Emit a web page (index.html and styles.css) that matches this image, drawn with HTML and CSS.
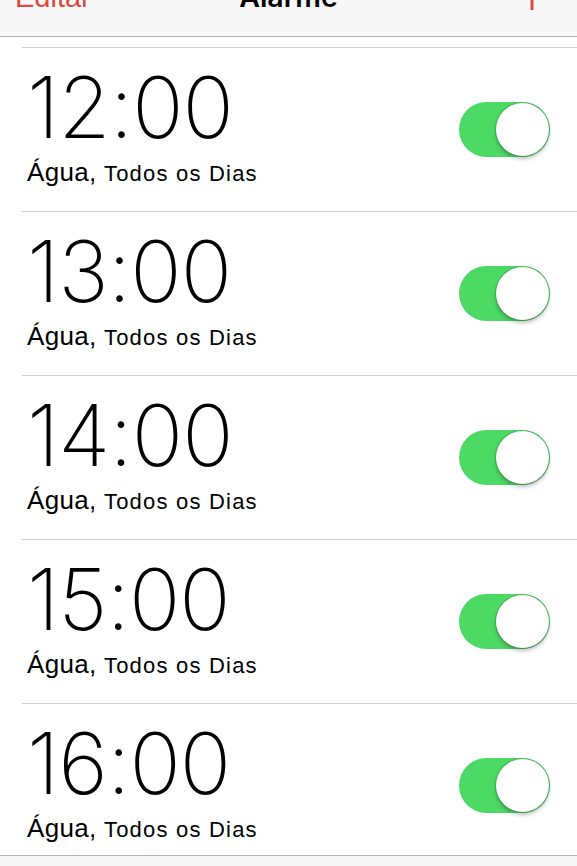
FILE: index.html
```html
<!DOCTYPE html>
<html>
<head>
	<meta charset="utf-8">
	<title>Alarme</title>
	<link rel="stylesheet" href="styles.css">
</head>
<body>
	<div class="screen">
		<div class="navbar">
			<span class="nav-btn">Editar</span>
			<span class="nav-title">Alarme</span>
			<span class="nav-add">
				<svg width="30" height="30" viewBox="0 0 30 30">
					<line x1="15" y1="0" x2="15" y2="30" stroke="#dc4a42" stroke-width="3"/>
					<line x1="0" y1="15" x2="30" y2="15" stroke="#dc4a42" stroke-width="3"/>
				</svg>
			</span>
		</div>

		<ul class="list">
			<li class="alarm">
				<div class="info">
					<div class="time">12:00</div>
					<div class="label">Água, <span class="repeat">Todos os Dias</span></div>
				</div>
				<div class="switch on"><span class="knob"></span></div>
			</li>
			<li class="alarm">
				<div class="info">
					<div class="time">13:00</div>
					<div class="label">Água, <span class="repeat">Todos os Dias</span></div>
				</div>
				<div class="switch on"><span class="knob"></span></div>
			</li>
			<li class="alarm">
				<div class="info">
					<div class="time">14:00</div>
					<div class="label">Água, <span class="repeat">Todos os Dias</span></div>
				</div>
				<div class="switch on"><span class="knob"></span></div>
			</li>
			<li class="alarm">
				<div class="info">
					<div class="time">15:00</div>
					<div class="label">Água, <span class="repeat">Todos os Dias</span></div>
				</div>
				<div class="switch on"><span class="knob"></span></div>
			</li>
			<li class="alarm">
				<div class="info">
					<div class="time">16:00</div>
					<div class="label">Água, <span class="repeat">Todos os Dias</span></div>
				</div>
				<div class="switch on"><span class="knob"></span></div>
			</li>
		</ul>

		<div class="tabbar"></div>
	</div>
</body>
</html>
```

FILE: styles.css
```css
* {
	margin: 0;
	padding: 0;
	box-sizing: border-box;
}
ul {
	list-style: none;
}

body {
	background-color: #fff;
	font-family: "Liberation Sans", Arial, sans-serif;
	color: #000;
}

.screen {
	width: 577px;
	height: 866px;
	overflow: hidden;
	display: flex;
	flex-direction: column;
}

/* barra de cima */
.navbar {
	height: 37px;
	flex: none;
	background-color: #f7f7f7;
	border-bottom: 1px solid #b4b4b4;
	display: grid;
	grid-template-columns: 1fr auto 1fr;
	align-items: start;
	padding: 0 15px;
	overflow: hidden;
}

.nav-btn,
.nav-title {
	font-size: 29px;
	line-height: 28px;
	margin-top: -17px;
}

.nav-btn {
	color: #dc4a42;
}

.nav-title {
	font-family: Inter, "Liberation Sans", sans-serif;
	font-weight: 600;
	font-size: 28.5px;
}

.nav-add {
	justify-self: end;
	display: flex;
	margin-top: -20px;
	margin-right: 15px;
}

/* lista de alarmes */
.list {
	flex: 1;
	overflow: hidden;
	padding-top: 10px;
}

.alarm {
	height: 164px;
	margin-left: 22px;
	border-top: 1px solid #d0d0d0;
	display: flex;
	justify-content: space-between;
	align-items: center;
	padding: 0 27px 0 5px;
}

.info {
	align-self: flex-start;
	padding-top: 11px;
}

.time {
	font-family: Inter, "Liberation Sans", sans-serif;
	font-weight: 150;
	font-size: 85px;
	line-height: 98px;
	letter-spacing: -1px;
}

.label {
	font-size: 26px;
	line-height: 26px;
	letter-spacing: 0.3px;
	margin-top: 2px;
}

.repeat {
	font-size: 22px;
	letter-spacing: 1.2px;
}

/* interruptor */
.switch {
	width: 91px;
	height: 55px;
	border-radius: 28px;
	background-color: #4cd964;
	position: relative;
}

.switch .knob {
	position: absolute;
	right: 1px;
	top: 1px;
	width: 53px;
	height: 53px;
	border-radius: 50%;
	background-color: #fff;
	box-shadow: 0 3px 4px rgba(0, 0, 0, 0.25), 0 0 0 1px rgba(0, 80, 20, 0.2);
}

.tabbar {
	height: 11px;
	flex: none;
	background-color: #f7f7f7;
	border-top: 1px solid #b4b4b4;
}
```
